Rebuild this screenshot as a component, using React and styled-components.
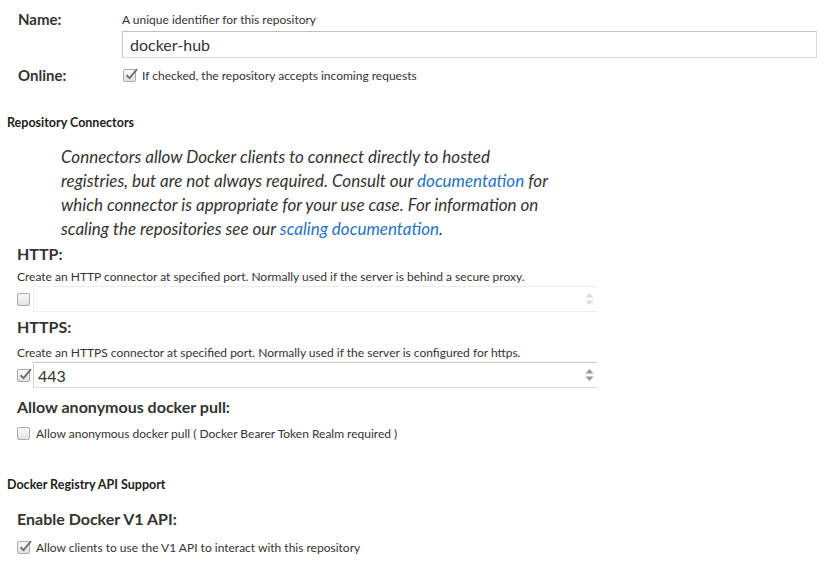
import React from "react";
import styled, { createGlobalStyle } from "styled-components";

const Global = createGlobalStyle`
  html, body { margin: 0; padding: 0; background: #fff; }
  body { font-family: Lato, "Open Sans", sans-serif; color: #333; }
`;

const Page = styled.div`
  width: 836px;
  padding-top: 13px;
`;

const TopRow = styled.div`
  display: grid;
  grid-template-columns: 122px 1fr;
  align-items: start;
  margin-top: ${(p) => p.$mt || 0}px;
  padding-right: 19px;
`;

const RowLabel = styled.div`
  padding-left: 18px;
  font-size: 15px;
  font-weight: 700;
  line-height: 18px;
  color: #333;
  margin-top: ${(p) => p.$mt || 0}px;
`;

const Help = styled.div`
  font-size: 12px;
  line-height: 14px;
  color: #333;
`;

const TextInput = styled.div`
  margin-top: ${(p) => p.$mt || 0}px;
  height: 27px;
  box-sizing: border-box;
  border: 1px solid #d8d8d8;
  border-top-color: #c0c0c0;
  border-left-color: #c8c8c8;
  font-size: 16px;
  line-height: 25px;
  padding-left: 7px;
  color: #333;
`;

const CheckLine = styled.label`
  display: flex;
  align-items: center;
  gap: 6px;
  height: ${(p) => p.$h || 16}px;
  margin-top: ${(p) => p.$mt || 0}px;
  padding-left: ${(p) => p.$pl || 0}px;
  font-size: 12px;
  color: #333;
`;

const Box = styled.span`
  width: 13px;
  height: 13px;
  box-sizing: border-box;
  border: 1px solid #aaa;
  border-radius: 2px;
  background: linear-gradient(#fafafa, #e2e2e2);
  position: relative;
  flex: none;
  margin-left: ${(p) => p.$ml || 0}px;
  svg {
    position: absolute;
    left: 0px;
    top: -3px;
  }
`;

const Check = ({ checked, ml }) => (
  <Box $ml={ml}>
    {checked && (
      <svg width="15" height="14" viewBox="0 0 15 14">
        <path d="M2.5 8.2 L5.6 11.2 L13 2.2" fill="none" stroke="#707070" strokeWidth="1.9" />
      </svg>
    )}
  </Box>
);

const SectionTitle = styled.div`
  padding-left: 7px;
  font-size: 12.5px;
  font-weight: 700;
  line-height: 16px;
  color: #222;
  margin-top: ${(p) => p.$mt || 0}px;
`;

const Intro = styled.p`
  margin: ${(p) => p.$mt || 0}px 0 0 61px;
  font-size: 17px;
  font-style: italic;
  line-height: 24px;
  color: #333;
`;

const Link = styled.a`
  color: #1e73c6;
  text-decoration: none;
`;

const FieldTitle = styled.div`
  padding-left: 17px;
  font-size: 16px;
  font-weight: 700;
  line-height: 20px;
  color: #333;
  margin-top: ${(p) => p.$mt || 0}px;
`;

const FieldHelp = styled.div`
  padding-left: 17px;
  font-size: 12px;
  line-height: 14px;
  color: #333;
  margin-top: ${(p) => p.$mt || 0}px;
`;

const PortRow = styled.div`
  display: flex;
  align-items: center;
  width: 597px;
  margin-top: ${(p) => p.$mt || 0}px;
  padding-left: 17px;
  box-sizing: border-box;
  gap: 3px;
`;

const PortInput = styled.div`
  flex: 1;
  height: 26px;
  box-sizing: border-box;
  border-top: 1px solid ${(p) => (p.$disabled ? "#ececec" : "#c4c4c4")};
  border-bottom: 1px solid ${(p) => (p.$disabled ? "#ececec" : "#dcdcdc")};
  border-left: 1px solid ${(p) => (p.$disabled ? "#ececec" : "#d4d4d4")};
  display: flex;
  align-items: center;
  justify-content: space-between;
  padding: 0 3px 0 4px;
  font-size: 16px;
  color: #333;
`;

const Spinner = ({ disabled }) => (
  <svg width="9" height="14" viewBox="0 0 9 14">
    <path d="M4.5 1 L8.5 5.5 L0.5 5.5 Z" fill={disabled ? "#dcdcdc" : "#9a9a9a"} />
    <path d="M4.5 13 L8.5 8.5 L0.5 8.5 Z" fill={disabled ? "#dcdcdc" : "#9a9a9a"} />
  </svg>
);

export default function App() {
  return (
    <Page>
      <Global />
      <TopRow>
        <RowLabel $mt={-3}>Name:</RowLabel>
        <div>
          <Help>A unique identifier for this repository</Help>
          <TextInput $mt={4}>docker-hub</TextInput>
        </div>
      </TopRow>
      <TopRow $mt={8}>
        <RowLabel>Online:</RowLabel>
        <CheckLine $h={18}>
          <Check checked ml={1} />
          <span>If checked, the repository accepts incoming requests</span>
        </CheckLine>
      </TopRow>

      <SectionTitle $mt={31}>Repository Connectors</SectionTitle>
      <Intro $mt={14}>
        Connectors allow Docker clients to connect directly to hosted
        <br />
        registries, but are not always required. Consult our <Link>documentation</Link> for
        <br />
        which connector is appropriate for your use case. For information on
        <br />
        scaling the repositories see our <Link>scaling documentation</Link>.
      </Intro>

      <FieldTitle $mt={3}>HTTP:</FieldTitle>
      <FieldHelp $mt={6}>
        Create an HTTP connector at specified port. Normally used if the server is behind a secure proxy.
      </FieldHelp>
      <PortRow $mt={2}>
        <Check />
        <PortInput $disabled>
          <span />
          <Spinner disabled />
        </PortInput>
      </PortRow>

      <FieldTitle $mt={5}>HTTPS:</FieldTitle>
      <FieldHelp $mt={9}>
        Create an HTTPS connector at specified port. Normally used if the server is configured for https.
      </FieldHelp>
      <PortRow $mt={2}>
        <Check checked />
        <PortInput>
          <span>443</span>
          <Spinner />
        </PortInput>
      </PortRow>

      <FieldTitle $mt={9}>Allow anonymous docker pull:</FieldTitle>
      <CheckLine $mt={8} $pl={17}>
        <Check />
        <span>Allow anonymous docker pull ( Docker Bearer Token Realm required )</span>
      </CheckLine>

      <SectionTitle $mt={36}>Docker Registry API Support</SectionTitle>
      <FieldTitle $mt={16}>Enable Docker V1 API:</FieldTitle>
      <CheckLine $mt={10} $pl={17}>
        <Check checked />
        <span>Allow clients to use the V1 API to interact with this repository</span>
      </CheckLine>
    </Page>
  );
}
